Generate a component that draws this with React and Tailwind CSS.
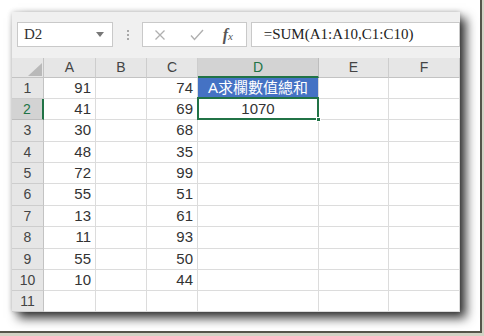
import React from 'react';

const cols = [
  { key: 'A', w: 'w-[52px]' },
  { key: 'B', w: 'w-[51px]' },
  { key: 'C', w: 'w-[51px]' },
  { key: 'D', w: 'w-[121px]' },
  { key: 'E', w: 'w-[70px]' },
  { key: 'F', w: 'w-[71px]' },
];

const rows = [
  { n: 1, a: 91, c: 74, tall: false },
  { n: 2, a: 41, c: 69, tall: false },
  { n: 3, a: 30, c: 68, tall: true },
  { n: 4, a: 48, c: 35, tall: false },
  { n: 5, a: 72, c: 99, tall: false },
  { n: 6, a: 55, c: 51, tall: true },
  { n: 7, a: 13, c: 61, tall: false },
  { n: 8, a: 11, c: 93, tall: true },
  { n: 9, a: 55, c: 50, tall: false },
  { n: 10, a: 10, c: 44, tall: false },
  { n: 11, a: '', c: '', tall: false },
];

const sans = { fontFamily: '"Liberation Sans", Arial, sans-serif' };
const serif = { fontFamily: '"Liberation Serif", "Times New Roman", serif' };
const cjk = { fontFamily: '"Liberation Sans", "Noto Sans CJK TC", sans-serif' };

function NameBox() {
  return (
    <div className="w-[98px] h-[25px] bg-white border border-[#c9c9c9] flex items-center justify-between pl-[6px] pr-[8px]">
      <span className="text-[15px] text-[#333]" style={serif}>D2</span>
      <svg width="8" height="5" viewBox="0 0 8 5"><path d="M0 0h8L4 5z" fill="#777" /></svg>
    </div>
  );
}

function FxIcons() {
  return (
    <div className="w-[105px] h-[25px] bg-white border border-[#c9c9c9] flex items-center">
      <svg className="ml-[11px]" width="12" height="12" viewBox="0 0 12 12">
        <path d="M1.5 1.5l9 9M10.5 1.5l-9 9" stroke="#b0b0b0" strokeWidth="1.3" />
      </svg>
      <svg className="ml-[24px]" width="14" height="12" viewBox="0 0 14 12">
        <path d="M1 6.5l3.5 4L13 1" stroke="#b0b0b0" strokeWidth="1.4" fill="none" />
      </svg>
      <span className="ml-[19px] text-[16px] italic font-bold text-[#555] leading-none" style={serif}>
        f<span className="text-[11px] font-normal">x</span>
      </span>
    </div>
  );
}

function Toolbar() {
  return (
    <div className="h-[46px] bg-[#f0f0f0] flex items-start pt-[10px] pl-[5px]">
      <NameBox />
      <div className="ml-[14px] mt-[8px] flex flex-col gap-[2px]">
        <div className="w-[2px] h-[2px] bg-[#a8a8a8]" />
        <div className="w-[2px] h-[2px] bg-[#a8a8a8]" />
        <div className="w-[2px] h-[2px] bg-[#a8a8a8]" />
      </div>
      <div className="ml-[13px]">
        <FxIcons />
      </div>
      <div className="ml-[4px] w-[215px] h-[25px] bg-white border border-[#c9c9c9] flex items-center pl-[12px]">
        <span className="text-[15px] text-[#222]" style={serif}>=SUM(A1:A10,C1:C10)</span>
      </div>
    </div>
  );
}

function HeaderRow() {
  return (
    <div className="flex h-[20px]">
      <div className="w-[32px] bg-[#e6e6e6] border-r border-b border-[#c3c3c3] flex items-end justify-end pr-[1px] pb-[1px]">
        <svg width="14" height="13" viewBox="0 0 14 13"><path d="M14 0V13H0z" fill="#b9b9b9" /></svg>
      </div>
      {cols.map((c) =>
        c.key === 'D' ? (
          <div key={c.key} className={`${c.w} bg-[#d3d3d3] border-r border-[#bdbdbd] border-b-2 border-b-[#217346] flex items-center justify-center text-[14px] text-[#217346]`} style={sans}>
            {c.key}
          </div>
        ) : (
          <div key={c.key} className={`${c.w} bg-[#e6e6e6] border-r border-b border-[#cdcdcd] border-b-[#c3c3c3] flex items-center justify-center text-[14px] text-[#444]`} style={sans}>
            {c.key}
          </div>
        )
      )}
    </div>
  );
}

function Row({ r }) {
  const sel = r.n === 2;
  return (
    <div className={`flex ${r.tall ? 'h-[22px]' : 'h-[21px]'}`}>
      {sel ? (
        <div className="w-[32px] bg-[#d3d3d3] border-b border-[#bdbdbd] border-r-2 border-r-[#217346] flex items-center justify-center text-[14px] text-[#217346]" style={sans}>
          {r.n}
        </div>
      ) : (
        <div className="w-[32px] bg-[#e6e6e6] border-r border-b border-[#cdcdcd] border-r-[#c3c3c3] flex items-center justify-center text-[14px] text-[#444]" style={sans}>
          {r.n}
        </div>
      )}
      {cols.map((c) => {
        if (c.key === 'D' && r.n === 1) {
          return (
            <div key={c.key} className={`${c.w} bg-[#4472c4] border-r border-b border-[#dadada] flex items-center justify-center text-[15px] text-white`} style={cjk}>
              A求欄數值總和
            </div>
          );
        }
        if (c.key === 'D' && r.n === 2) {
          return (
            <div key={c.key} className={`${c.w} relative bg-white border-r border-b border-[#dadada] flex items-center justify-center text-[15px] text-[#333]`} style={sans}>
              1070
              <div className="absolute -top-[2px] -left-[1px] -right-[1px] -bottom-[1px] border-2 border-[#217346]" />
              <div className="absolute -right-[3px] -bottom-[3px] w-[5px] h-[5px] bg-[#217346] border border-white" />
            </div>
          );
        }
        const v = c.key === 'A' ? r.a : c.key === 'C' ? r.c : '';
        return (
          <div key={c.key} className={`${c.w} bg-white border-r border-b border-[#dcdcdc] flex items-center justify-end pr-[4px] text-[15px] text-[#333]`} style={sans}>
            {v}
          </div>
        );
      })}
    </div>
  );
}

export default function App() {
  return (
    <div className="w-[484px] h-[336px] bg-[#d2d2c4] overflow-hidden">
      <div className="w-[482px] h-[333px] bg-white border-r-2 border-b-2 border-[#55554a] pt-[12px] pl-[12px]">
        <div className="w-[448px] h-[300px] bg-white overflow-hidden flex flex-col shadow-[6px_6px_10px_rgba(0,0,0,0.8),0_0_5px_rgba(0,0,0,0.2)]">
          <Toolbar />
          <HeaderRow />
          {rows.map((r) => (
            <Row key={r.n} r={r} />
          ))}
        </div>
      </div>
    </div>
  );
}
